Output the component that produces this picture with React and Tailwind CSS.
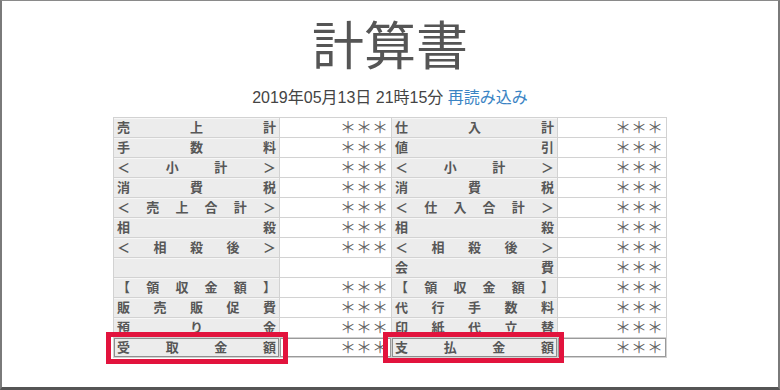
const rows = [
  [['売', '上', '計'], true, ['仕', '入', '計'], true],
  [['手', '数', '料'], true, ['値', '引'], true],
  [['＜', '小', '計', '＞'], true, ['＜', '小', '計', '＞'], true],
  [['消', '費', '税'], true, ['消', '費', '税'], true],
  [['＜', '売', '上', '合', '計', '＞'], true, ['＜', '仕', '入', '合', '計', '＞'], true],
  [['相', '殺'], true, ['相', '殺'], true],
  [['＜', '相', '殺', '後', '＞'], true, ['＜', '相', '殺', '後', '＞'], true],
  [[], false, ['会', '費'], true],
  [['【', '領', '収', '金', '額', '】'], true, ['【', '領', '収', '金', '額', '】'], true],
  [['販', '売', '販', '促', '費'], true, ['代', '行', '手', '数', '料'], true],
  [['預', 'り', '金'], true, ['印', '紙', '代', '立', '替'], true],
  [['受', '取', '金', '額'], true, ['支', '払', '金', '額'], true, 'total'],
];

const font = { fontFamily: '"Liberation Sans", "Noto Sans CJK JP", sans-serif' };

function Label({ chars, last, mark }) {
  return (
    <div
      className={`relative flex h-[20px] items-center justify-between border-r border-b border-[#d2d2d2] bg-[#ececec] px-[3px] text-[13px] font-bold leading-none text-[#575757] ${
        last ? 'shadow-[inset_0_0_0_1px_#8e8e8e]' : 'shadow-[inset_0_1px_0_#f7f7f7]'
      }`}
    >
      {chars.map((c, i) => (
        <span key={i}>{c}</span>
      ))}
      {mark && (
        <div className={`pointer-events-none absolute z-10 border-[5px] border-[#e2133d] ${mark}`} />
      )}
    </div>
  );
}

function Value({ show, last }) {
  return (
    <div
      className={`flex h-[20px] items-center justify-end border-r border-b border-[#d2d2d2] bg-white pr-[3px] text-[16px] leading-none text-[#666] ${
        last ? 'shadow-[inset_0_0_0_1px_#9a9a9a]' : ''
      }`}
    >
      {show ? '＊＊＊' : ''}
    </div>
  );
}

export default function App() {
  return (
    <div
      className="box-border flex h-[390px] w-[780px] flex-col items-center border-x-2 border-t border-b-[3px] border-x-[#7a7a7a] border-t-[#8a8a8a] border-b-[#555] bg-white pt-[17px]"
      style={font}
    >
      <h1 className="text-[52px] font-normal leading-[58px] text-[#555]">計算書</h1>
      <p className="mt-[12px] text-[16px] leading-[20px] text-[#444]">
        2019年05月13日 21時15分 <span className="text-[#3a84c4]">再読み込み</span>
      </p>
      <div className="mt-[9px] grid grid-cols-[166px_112px_166px_109px] border-t border-l border-[#d2d2d2]">
        {rows.map(([l, lv, r, rv, kind], i) => {
          const last = kind === 'total';
          return [
            <Label key={`a${i}`} chars={l} last={last} mark={last ? '-left-[8px] -right-[9px] -top-[6px] -bottom-[7px]' : null} />,
            <Value key={`b${i}`} show={lv} last={last} />,
            <Label key={`c${i}`} chars={r} last={last} mark={last ? '-left-[9px] -right-[7px] -top-[6px] -bottom-[6px]' : null} />,
            <Value key={`d${i}`} show={rv} last={last} />,
          ];
        })}
      </div>
    </div>
  );
}
